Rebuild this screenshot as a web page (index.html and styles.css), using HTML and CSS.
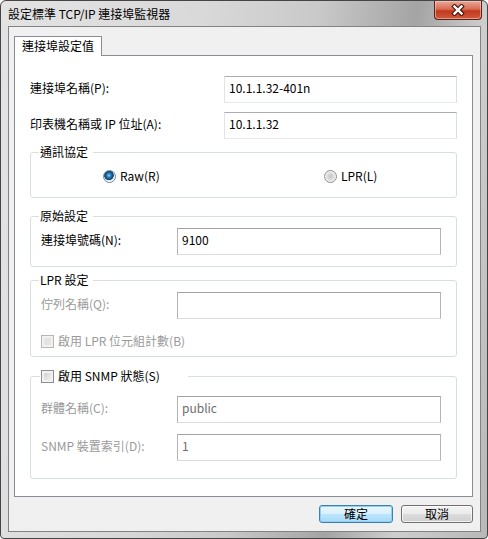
FILE: index.html
```html
<!DOCTYPE html>
<html lang="zh-Hant">
<head>
    <meta charset="UTF-8">
    <title>設定標準 TCP/IP 連接埠監視器</title>
    <link rel="stylesheet" href="styles.css">
</head>
<body>
    <div class="window">
        <div class="titlebar">
            <span class="title">設定標準 TCP/IP 連接埠監視器</span>
            <button class="close" type="button">
                <svg width="14" height="12" viewBox="0 0 14 12">
                    <path d="M3.5 2.5 L10.5 9.5 M10.5 2.5 L3.5 9.5" stroke="#4b1a12" stroke-width="4.6" stroke-linecap="square"/>
                    <path d="M3.5 2.5 L10.5 9.5 M10.5 2.5 L3.5 9.5" stroke="#fff" stroke-width="2.4" stroke-linecap="square"/>
                </svg>
            </button>
        </div>

        <div class="client">
            <div class="tabs">
                <div class="tab">連接埠設定值</div>
            </div>

            <div class="panel">
                <div class="row">
                    <label class="label">連接埠名稱(P):</label>
                    <input class="field" type="text" value="10.1.1.32-401n">
                </div>
                <div class="row">
                    <label class="label">印表機名稱或 IP 位址(A):</label>
                    <input class="field" type="text" value="10.1.1.32">
                </div>

                <!-- 通訊協定 -->
                <fieldset class="group protocol">
                    <legend>通訊協定</legend>
                    <div class="radios">
                        <label class="opt"><span class="radio checked"></span>Raw(R)</label>
                        <label class="opt"><span class="radio"></span>LPR(L)</label>
                    </div>
                </fieldset>

                <!-- 原始設定 -->
                <fieldset class="group raw">
                    <legend>原始設定</legend>
                    <div class="grow">
                        <label class="glabel">連接埠號碼(N):</label>
                        <input class="field gfield" type="text" value="9100">
                    </div>
                </fieldset>

                <!-- LPR 設定 -->
                <fieldset class="group lpr">
                    <legend>LPR 設定</legend>
                    <div class="grow">
                        <label class="glabel off">佇列名稱(Q):</label>
                        <input class="field gfield" type="text" value="" disabled>
                    </div>
                    <label class="checkrow off"><span class="check dim"></span>啟用 LPR 位元組計數(B)</label>
                </fieldset>

                <!-- SNMP -->
                <fieldset class="group snmp">
                    <legend class="checklegend"><span class="check"></span>啟用 SNMP 狀態(S)</legend>
                    <div class="grow">
                        <label class="glabel off">群體名稱(C):</label>
                        <input class="field gfield" type="text" value="public" disabled>
                    </div>
                    <div class="grow">
                        <label class="glabel off">SNMP 裝置索引(D):</label>
                        <input class="field gfield" type="text" value="1" disabled>
                    </div>
                </fieldset>
            </div>

            <div class="buttons">
                <button class="btn ok" type="button">確定</button>
                <button class="btn" type="button">取消</button>
            </div>
        </div>
    </div>
</body>
</html>
```

FILE: styles.css
```css
body {
    margin: 0;
    font-family: "Noto Sans CJK TC", "Noto Sans", sans-serif;
    font-size: 12px;
    line-height: 14px;
    color: #000;
}

.window {
    width: 488px;
    height: 539px;
    box-sizing: border-box;
    border: 1px solid #454545;
    border-radius: 6px 6px 4px 4px;
    display: flex;
    flex-direction: column;
    overflow: hidden;
    background: linear-gradient(100deg, #e3e3e3 0%, #d9d9d9 35%, #c9c9c9 55%, #a4a4a4 72%, #cecece 84%, #b8b8b8 100%);
}

.titlebar {
    height: 25px;
    display: flex;
    align-items: center;
    padding-left: 7px;
}

.close {
    margin-left: auto;
    margin-right: 5px;
    align-self: flex-start;
    width: 48px;
    height: 19px;
    padding: 0;
    border: 1px solid #5a2218;
    border-top: none;
    border-radius: 0 0 4px 4px;
    background: linear-gradient(#e9a797 0%, #d86d55 45%, #c3381d 55%, #cf5a3c 100%);
    box-shadow: inset 0 0 0 1px rgba(255, 220, 210, 0.5);
    display: flex;
    align-items: center;
    justify-content: center;
}

.client {
    flex: 1;
    margin: 0 6px 6px 7px;
    border: 1px solid #838383;
    background: #f0f0f0;
    padding: 9px 7px 8px 5px;
    display: flex;
    flex-direction: column;
}

.tabs {
    display: flex;
}

.tab {
    position: relative;
    z-index: 1;
    width: 86px;
    height: 19px;
    margin-bottom: -1px;
    border: 1px solid #898c95;
    border-bottom: none;
    background: #fff;
    text-align: center;
    line-height: 18px;
}

.panel {
    height: 442px;
    box-sizing: border-box;
    border: 1px solid #898c95;
    background: #fff;
    padding: 20px 15px 0;
}

.row {
    display: flex;
    align-items: center;
    height: 27px;
}

.row + .row {
    margin-top: 9px;
}

.label {
    width: 194px;
    padding-bottom: 3px;
}

.field {
    box-sizing: border-box;
    width: 233px;
    height: 27px;
    margin: 0;
    padding: 0 4px 4px;
    border: 1px solid;
    border-color: #abadb3 #dbdfe6 #e3e9ef #e2e3ea;
    background: #fff;
    font-family: inherit;
    font-size: 12px;
    color: #000;
    outline: none;
}

.field:disabled {
    color: #6d6d6d;
}

.group {
    margin: 0;
    min-width: 0;
    border: 1px solid #d5dfe5;
    border-radius: 3px;
    padding: 0 0 0 10px;
}

.group legend {
    margin-left: -2px;
    padding: 0 5px 0 1px;
    line-height: 14px;
}

.protocol {
    margin-top: 6px;
    padding-top: 10px;
    padding-bottom: 14px;
}

.raw {
    margin-top: 11px;
    padding-top: 5px;
    padding-bottom: 11px;
}

.lpr {
    margin-top: 6px;
    padding-top: 5px;
    padding-bottom: 8px;
}

.snmp {
    margin-top: 12px;
    padding-top: 13px;
    padding-bottom: 17px;
}

.radios {
    display: grid;
    grid-template-columns: 221px auto;
    padding-left: 62px;
}

.opt {
    display: flex;
    align-items: center;
    gap: 4px;
}

.radio {
    width: 13px;
    height: 13px;
    box-sizing: border-box;
    border: 1px solid #8e8f8f;
    border-radius: 50%;
    background: radial-gradient(circle, #c6c6c6 0, #dadada 3px, #eeeeee 5px, #fafafa 6px);
}

.radio.checked {
    border-color: #6d8aa3;
    background: radial-gradient(circle at 45% 40%, #8fd1f5 0, #2a7fc0 2px, #10456f 4px, #2b5a7c 4.6px, #e8e8e8 5px, #f7f7f7 6px);
}

.grow {
    display: flex;
    align-items: center;
    height: 27px;
}

.grow + .grow {
    margin-top: 11px;
}

.glabel {
    width: 136px;
    padding-bottom: 3px;
}

.gfield {
    width: 264px;
    border-color: #a3a3a3 #b5b5b5 #dcdcdc #b5b5b5;
}

.off {
    color: #9a9a9a;
}

.checkrow {
    display: flex;
    align-items: center;
    gap: 4px;
    margin-top: 15px;
    height: 14px;
}

.check {
    width: 13px;
    height: 13px;
    box-sizing: border-box;
    border: 1px solid #8e8f8f;
    background: linear-gradient(135deg, #cbcbcb, #f7f7f7);
    box-shadow: inset 0 0 0 2px #f2f2f2;
}

.check.dim {
    border-color: #b6b6b6;
    background: #e4e4e4;
    box-shadow: inset 0 0 0 2px #f1f1f1;
}

.group .checklegend {
    display: flex;
    align-items: center;
    gap: 4px;
    margin-left: -1px;
    padding: 0 28px 0 1px;
}

.buttons {
    display: flex;
    justify-content: flex-end;
    gap: 8px;
    margin-top: 8px;
}

.btn {
    width: 72px;
    height: 18px;
    padding: 0;
    border: 1px solid #707070;
    border-radius: 3px;
    background: linear-gradient(#f3f3f3 0%, #ebebeb 50%, #dddddd 50%, #cfcfcf 100%);
    box-shadow: inset 0 0 0 1px rgba(255, 255, 255, 0.7);
    font-family: inherit;
    font-size: 12px;
    line-height: 14px;
    color: #000;
}

.btn.ok {
    width: 74px;
    border-color: #3c7fb1;
    background: linear-gradient(#eaf6fd 0%, #d9f0fc 50%, #bee6fd 50%, #a7d9f5 100%);
    box-shadow: inset 0 0 0 1px #8fd0f5;
}
```
